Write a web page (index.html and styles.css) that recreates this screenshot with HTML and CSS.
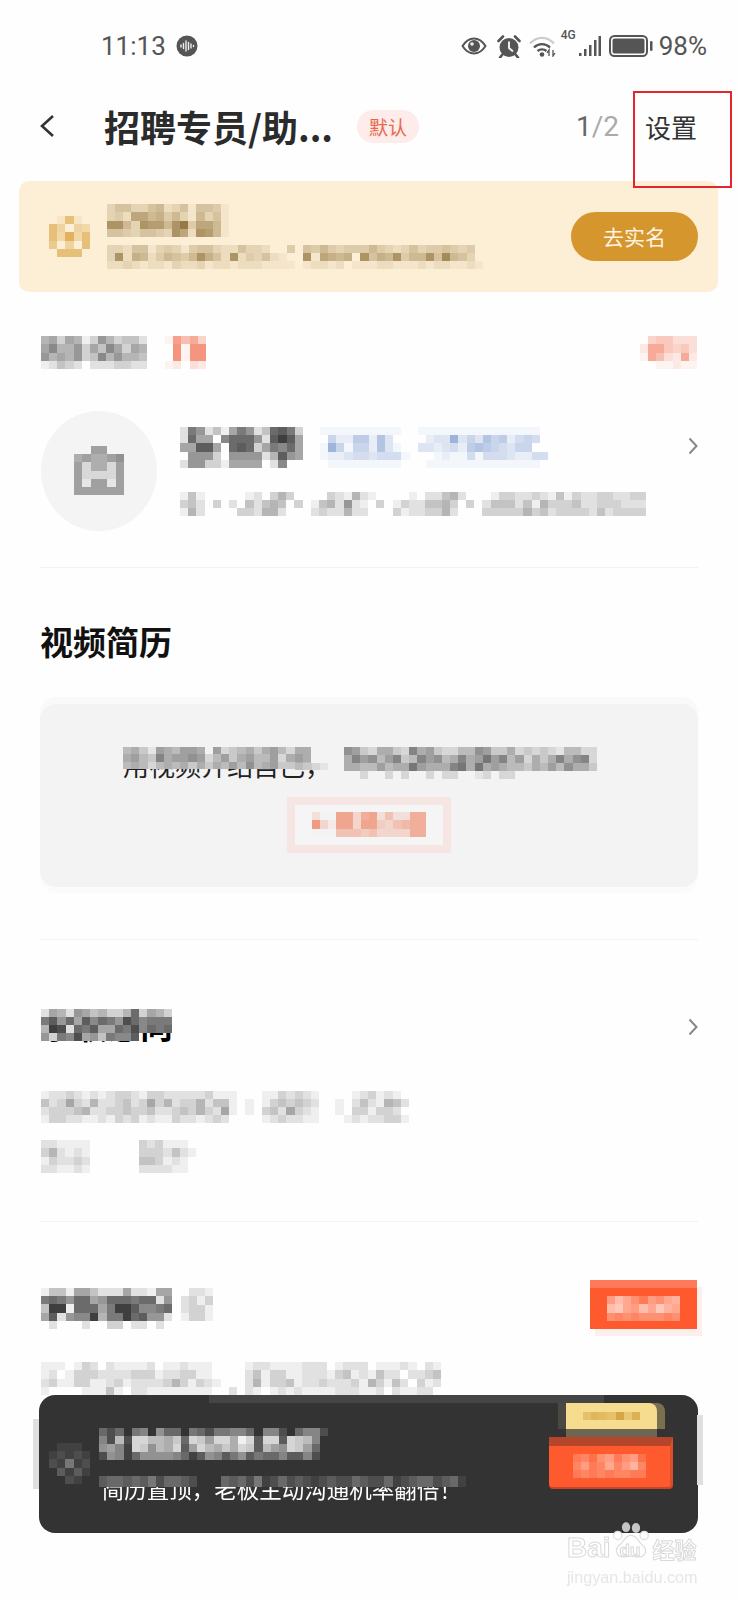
FILE: index.html
```html
<!DOCTYPE html>
<html lang="zh-CN">
<head>
    <meta charset="UTF-8">
    <meta name="viewport" content="width=device-width, initial-scale=1.0">
    <title>招聘专员/助理</title>
    <link rel="stylesheet" href="styles.css">
</head>
<body>
<div class="page">
    <div class="status">
        <span class="time">11:13</span>
        <svg class="voice" viewBox="0 0 22 22"><circle cx="11" cy="11" r="10.5" fill="#555"/><path d="M5 10v2M7.5 8.5v5M10 6v10M12.5 7.5v7M15 9v4M17.5 10.5v1" stroke="#eee" stroke-width="1.4" stroke-linecap="round"/></svg>
        <div class="status-right">
            <svg class="eye" viewBox="0 0 26 18"><path d="M1.5 9C5 3.5 8.5 1.5 13 1.5S21 3.5 24.5 9C21 14.500 17.500 16.500 13 16.500S5 14.500 1.500 9Z" fill="none" stroke="#555" stroke-width="2"/><circle cx="13" cy="9" r="6" fill="#555"/><circle cx="11" cy="7" r="1.800" fill="#eee"/></svg>
            <svg class="alarm" viewBox="0 0 24 23"><circle cx="12" cy="12.500" r="9.500" fill="#555"/><path d="M12 6.500v6.500l4 3.500" fill="none" stroke="#eee" stroke-width="2"/><path d="M1.500 6 6 1.500M22.500 6 18 1.500M5 20l-2 2.500M19 20l2 2.500" stroke="#555" stroke-width="2.600" stroke-linecap="round"/></svg>
            <svg class="wifi" viewBox="0 0 27 22"><path d="M1 8.500C8 1 18 1 25 8.500" fill="none" stroke="#ccc" stroke-width="2.400"/><path d="M5 12.500C9.500 8 16.500 8 21 12.500" fill="none" stroke="#555" stroke-width="2.400"/><path d="M8.500 16C11 13.800 15 13.800 17.500 16" fill="none" stroke="#555" stroke-width="2.400"/><circle cx="13" cy="19.500" r="2.300" fill="#555"/><path d="M20 21v-6l-2 3M24 15v6l2-3" fill="none" stroke="#555" stroke-width="1.300"/></svg>
            <span class="net">4G</span>
            <svg class="signal" viewBox="0 0 24 22"><path d="M2 18h2.500v3H2zM7 14h2.500v7H7zM12 10h2.500v11H12zM17 5h2.500v16H17zM21.500 1H24v20h-2.500z" fill="#555"/></svg>
            <svg class="battery" viewBox="0 0 44 22"><rect x="1" y="1" width="37" height="20" rx="4.500" fill="none" stroke="#555" stroke-width="2"/><rect x="3.500" y="3.500" width="32" height="15" rx="2" fill="#555"/><rect x="41" y="6" width="2.500" height="10" rx="1.200" fill="#555"/></svg>
            <span class="percent">98%</span>
        </div>
    </div>

    <div class="nav">
        <svg class="back" viewBox="0 0 16 24"><path d="M14 2 3 12l11 10" fill="none" stroke="#333" stroke-width="2.600"/></svg>
        <h1 class="nav-title">招聘专员/助...</h1>
        <span class="badge">默认</span>
        <span class="pager">1<em>/2</em></span>
        <span class="settings">设置</span>
    </div>
    <div class="red-box"></div>

    <div class="banner">
        <canvas class="mosaic ink-gold" data-rows="02a20|a6065|a5d5a|8060a|0aaa0"></canvas>
        <div class="banner-text">
            <canvas class="mosaic ink-brown" data-rows="355335623515541|342886746316351|aa63a996ad48861|55435543a82a961"></canvas>
            <canvas class="mosaic ink-brown" data-rows="332551343145532253320040546434446432353445434|3a276246546a752a24352100a187670a576a466a5b653|2232122132231221222111101221201112211121221121"></canvas>
        </div>
        <span class="realname">去实名</span>
    </div>

    <div class="row head-row">
        <canvas class="mosaic ink-dark" data-rows="56365137534420|68557364863650|75657348575540|12432022233220"></canvas>
        <canvas class="mosaic ink-red" data-rows="19684|0a1aa|0a1aa|12032"></canvas>
        <canvas class="mosaic ink-red push-right" data-rows="0455333|2885453|1863282|0011211"></canvas>
    </div>

    <div class="person">
        <div class="avatar">
            <canvas class="mosaic ink-dark on-gray" data-rows="006600|565567|625526|622226|616616|666666"></canvas>
        </div>
        <div class="person-info">
            <div class="name-row">
                <canvas class="mosaic ink-dark" data-rows="29724169724ab93|2a6608aaa72bdb6|66bb60aba3698a6|077730777725b76|277331666602800"></canvas>
                <canvas class="mosaic ink-blue" data-rows="1111111111001111111111111110|0522662730000233935375624540|1951552731003323426765435500|1223443444100012114144432244|0111111111000111111111111110"></canvas>
            </div>
            <canvas class="mosaic ink-dark person-line" data-rows="141000001203530000321521000010224520001332232141322332233|342030204245403014527210301322445303024442415333422333222|152000033255200023225220003122335200033333534233332423333"></canvas>
        </div>
        <svg class="chevron person-chevron" viewBox="0 0 10 18"><path d="M1.500 1.500 8.500 9l-7 7.500" fill="none" stroke="#888" stroke-width="2"/></svg>
    </div>
    <div class="divider divider-person"></div>

    <h2 class="section-title">视频简历</h2>
    <div class="video-card">
        <div class="video-line">
            <span class="video-text">用视频介绍自己，</span>
            <canvas class="mosaic ink-dark on-card over" data-h="22" data-rows="45316546650623453564255|56438566762463564462565|45424545353546474563354"></canvas>
            <canvas class="mosaic ink-dark on-card over over-patch" data-h="7" data-rows="4321"></canvas>
            <canvas class="mosaic ink-dark on-card over over-right" data-rows="7632553285632244763352323214422|5867468348674585696846253585782|5544645596555895956544354647553|0020020200202200120220000000000"></canvas>
        </div>
        <div class="record-btn">
            <canvas class="mosaic ink-orange on-card" data-rows="20088378252277|93188388435677|00055545333377"></canvas>
        </div>
    </div>
    <div class="divider divider-video"></div>

    <div class="row expect-row">
        <div class="covered-title">
            <span class="covered-text">求职意向</span>
            <canvas class="mosaic ink-dark over" data-rows="26527645335a3653|9b7a6b8a97ca8999|5dc2a9b66a9c8a9a"></canvas>
            <canvas class="mosaic ink-dark over over-last" data-rows="7398c674988b"></canvas>
        </div>
        <svg class="chevron expect-chevron" viewBox="0 0 10 18"><path d="M1.500 1.500 8.500 9l-7 7.500" fill="none" stroke="#888" stroke-width="2"/></svg>
    </div>
    <canvas class="mosaic ink-dark expect-line" data-rows="122321212332133222223111000113232100001231210|423632522342363523352441010134343200102421542|233345223343342234353261010342632100103313320|133221121323121132212320000123221100012122331"></canvas>
    <canvas class="mosaic ink-dark expect-line-two" data-rows="2211110000003231110|3521210000003332421|1322320000004431210|2211210000002222110"></canvas>
    <div class="divider divider-expect"></div>

    <div class="row pref-row">
        <canvas class="mosaic ink-dark" data-rows="1441664222622166|9a97aa67aaa9aa27|4dd1aaa69ddb889a|6b2788d599dab772|0200020033022020"></canvas>
        <canvas class="mosaic ink-dark" data-rows="0221|2313|2331|1331"></canvas>
        <div class="pref-btn">
            <canvas class="mosaic ink-white on-orange" data-rows="697536578|9a7697a87|545455545"></canvas>
        </div>
    </div>
    <canvas class="mosaic ink-dark pref-line" data-rows="1110132021111201121110000122111122201222011121021|1201333222233312233110000241331122213412142202234|2311331123122223531321000251334122322231531420312|1000011141022111111110020210121211112221120211220"></canvas>

    <div class="promo">
        <canvas class="mosaic ink-white on-dark promo-icon" data-rows="01110|12121|21512|03131|00210"></canvas>
        <div class="promo-text">
            <canvas class="mosaic ink-white on-dark" data-rows="4240560744054255664066204662|62a2ccaa9b4cb8cc9ec3cc3cba60|7861cb7a9c38ca9b9cb3a87cb840|2761477776413763573544633620"></canvas>
            <div class="promo-line">
                <span class="promo-sub">简历置顶，老板主动沟通机率翻倍！</span>
                <canvas class="mosaic ink-white on-dark over over-sub" data-h="11" data-rows="344343524432000434251242321232243224123442341"></canvas>
            </div>
        </div>
        <div class="promo-action">
            <div class="coupon">
                <canvas class="mosaic ink-coupon on-coupon" data-rows="5765a48"></canvas>
            </div>
            <div class="coupon-under"></div>
            <div class="buy-btn">
                <canvas class="mosaic ink-white on-orange" data-rows="342563562|463474684|343434433"></canvas>
            </div>
        </div>
    </div>

    <div class="watermark">
        <div class="wm-logo">
            <span class="wm-latin">Bai</span>
            <span class="wm-paw">
                <svg viewBox="0 0 46 50"><ellipse cx="17" cy="7" rx="5" ry="6" fill="#c6c6c6"/><ellipse cx="29" cy="8" rx="5" ry="6" fill="#c6c6c6"/><circle cx="7" cy="17" r="5" fill="#fff" stroke="#ddd" stroke-width="1.500"/><circle cx="39" cy="17" r="5" fill="#fff" stroke="#ddd" stroke-width="1.500"/><path d="M23 17C16 17 15 24 9 29 2 35 6 44 15 43 20 42 26 42 31 43 40 44 44 35 37 29 31 24 30 17 23 17Z" fill="#fff" stroke="#ddd" stroke-width="1.500"/></svg>
                <span class="wm-du">du</span>
            </span>
            <span class="wm-cn">经验</span>
        </div>
        <span class="wm-url">jingyan.baidu.com</span>
    </div>
</div>
<script src="mosaic.js"></script>
</body>
</html>
```
FILE: styles.css
```css
* {
    margin: 0;
    padding: 0;
    box-sizing: border-box;
}
body {
    font-family: "Noto Sans CJK SC", "Noto Sans", sans-serif;
    background-color: #fefefe;
}
.page {
    position: relative;
    width: 738px;
    height: 1600px;
    overflow: hidden;
}

/* status bar */
.status {
    display: flex;
    align-items: center;
    height: 92px;
    padding: 0 31px 0 101px;
    color: #555;
}
.time, .percent {
    font-family: Roboto, sans-serif;
    font-size: 26px;
    font-weight: 400;
}
.voice {
    width: 22px;
    height: 22px;
    margin-left: 10px;
}
.status-right {
    display: flex;
    align-items: center;
    margin-left: auto;
}
.eye {
    width: 26px;
    height: 18px;
}
.alarm {
    width: 24px;
    height: 23px;
    margin-left: 10px;
}
.wifi {
    width: 27px;
    height: 22px;
    margin-left: 8px;
}
.net {
    align-self: flex-start;
    margin: -3px 0 0 5px;
    font-family: Roboto, sans-serif;
    font-size: 12px;
    font-weight: 500;
    line-height: 14px;
}
.signal {
    width: 24px;
    height: 22px;
    margin-left: 1px;
}
.battery {
    width: 44px;
    height: 22px;
    margin-left: 8px;
}
.percent {
    margin-left: 6px;
}

/* nav */
.nav {
    display: flex;
    align-items: center;
    height: 68px;
    margin-bottom: 21px;
    padding: 0 41px 0 39px;
}
.back {
    width: 16px;
    height: 24px;
    margin-right: 49px;
}
.nav-title {
    font-size: 36px;
    font-weight: 700;
    line-height: 44px;
    color: #2b2b2b;
    white-space: nowrap;
}
.badge {
    margin-left: 24px;
    padding: 0 12px;
    border-radius: 17px;
    background-color: #fdecea;
    color: #e8684f;
    font-size: 19px;
    line-height: 33px;
}
.pager {
    margin-left: auto;
    font-family: Roboto, sans-serif;
    font-size: 28px;
    color: #666;
}
.pager em {
    font-style: normal;
    color: #aaa;
}
.settings {
    margin-left: 26px;
    font-size: 26px;
    color: #333;
}
.red-box {
    position: absolute;
    top: 91px;
    left: 633px;
    width: 99px;
    height: 97px;
    border: 2px solid #e4252b;
}

/* pixelated blocks, drawn by mosaic.js */
.mosaic {
    display: block;
    flex-shrink: 0;
    image-rendering: pixelated;
    filter: blur(0.5px);
    background-color: #fefefe;
}
.ink-dark { color: #222; }
.ink-red { color: #f0603c; }
.ink-blue { color: #5f82c4; }
.ink-orange { color: #ec6036; }
.ink-white { color: #fff; }
.ink-gold { color: #dba94a; background-color: #fdefd6; }
.ink-brown { color: #86672d; background-color: #fdefd6; }
.ink-coupon { color: #c98a20; }
.on-gray { background-color: #f4f4f4; }
.on-card { background-color: #f3f3f3; }
.on-orange { background-color: #ff5a2d; }
.on-dark { background-color: #333; }
.on-coupon { background-color: #f5dc8f; }
.over {
    position: absolute;
    top: 0;
    left: 0;
}

/* banner */
.banner {
    display: flex;
    align-items: center;
    height: 111px;
    margin: 0 20px 0 19px;
    padding: 0 20px 0 30px;
    border-radius: 10px;
    background-color: #fdefd6;
}
.banner-text {
    display: flex;
    flex-direction: column;
    gap: 8px;
    margin-left: 17px;
}
.realname {
    margin-left: auto;
    width: 127px;
    border-radius: 25px;
    background-color: #d6962e;
    color: #fdf3e0;
    font-size: 21px;
    line-height: 49px;
    text-align: center;
}

/* rows */
.row {
    display: flex;
    padding: 0 41px 0 41px;
}
.head-row {
    gap: 10px;
    margin-top: 44px;
}
.push-right {
    margin-left: auto;
}
.person {
    display: flex;
    height: 120px;
    margin-top: 42px;
    padding: 0 40px 0 41px;
}
.avatar {
    display: flex;
    align-items: center;
    justify-content: center;
    width: 116px;
    height: 120px;
    border-radius: 50%;
    background-color: #f4f4f4;
}
.person-info {
    margin-left: 23px;
    padding-top: 16px;
}
.name-row {
    display: flex;
    gap: 17px;
}
.person-line {
    margin-top: 24px;
}
.chevron {
    width: 10px;
    height: 18px;
    margin-left: auto;
}
.person-chevron {
    margin-top: 26px;
}
.divider {
    height: 1px;
    margin: 0 40px;
    background-color: #f2f2f2;
}
.divider-person {
    margin-top: 36px;
}
.section-title {
    margin: 53px 0 0 40px;
    font-size: 33px;
    font-weight: 700;
    line-height: 40px;
    color: #111;
}

/* video card */
.video-card {
    display: flex;
    flex-direction: column;
    align-items: center;
    height: 183px;
    margin: 43px 40px 0 40px;
    padding-top: 43px;
    border-radius: 16px;
    background-color: #f3f3f3;
    box-shadow: 0 -7px 0 #f9f9f9, 0 6px 0 #fbfbfb;
}
.video-line {
    position: relative;
    align-self: flex-start;
    width: 476px;
    height: 32px;
    margin-left: 83px;
}
.video-text {
    font-size: 26px;
    line-height: 36px;
    color: #222;
    white-space: nowrap;
}
.over-patch {
    top: 16px;
    left: 172px;
}
.over-right {
    left: 221px;
}
.record-btn {
    display: flex;
    align-items: center;
    justify-content: center;
    width: 164px;
    height: 56px;
    margin-top: 18px;
    border: 8px solid #f6e6e3;
    background-color: #f5f5f5;
}
.divider-video {
    margin-top: 52px;
}

/* expectation */
.expect-row {
    margin-top: 69px;
    padding-right: 40px;
}
.covered-title {
    position: relative;
    width: 132px;
    height: 33px;
}
.covered-text {
    font-size: 33px;
    font-weight: 700;
    line-height: 33px;
    color: #000;
    white-space: nowrap;
}
.over-last {
    top: 24.500px;
}
.expect-chevron {
    margin-top: 9px;
}
.expect-line {
    margin: 49px 0 0 41px;
}
.expect-line-two {
    margin: 17px 0 0 41px;
}
.divider-expect {
    margin-top: 48px;
}

/* preference */
.pref-row {
    gap: 9px;
    align-items: flex-start;
    margin-top: 58px;
}
.pref-row > .mosaic {
    margin-top: 8px;
}
.pref-btn {
    display: flex;
    align-items: center;
    justify-content: center;
    width: 107px;
    height: 49px;
    margin-left: auto;
    border-top: 8px solid #ff7a5a;
    background-color: #ff5a2d;
    box-shadow: 5px 7px 0 #fdf0ec;
}
.pref-line {
    margin: 33px 0 0 41px;
}

/* promo bar */
.promo {
    position: relative;
    display: flex;
    align-items: flex-start;
    height: 138px;
    margin: 0 40px 0 39px;
    border-radius: 16px;
    background: linear-gradient(#454545, #454545) 170px 0 / 395px 8px no-repeat, #333;
}
.promo::before, .promo::after {
    content: "";
    position: absolute;
    width: 6px;
    height: 70px;
    background-color: #e0e0e0;
}
.promo::before {
    top: 24px;
    left: -6px;
}
.promo::after {
    top: 20px;
    right: -5px;
}
.promo-icon {
    margin: 48px 0 0 10px;
}
.promo-text {
    margin: 33px 0 0 9px;
}
.promo-line {
    position: relative;
    width: 370px;
    height: 28px;
    margin-top: 14px;
    padding-left: 3px;
}
.promo-sub {
    display: block;
    font-size: 22.5px;
    line-height: 28px;
    color: #fff;
    white-space: nowrap;
}
.over-sub {
    top: 2px;
}
.promo-action {
    width: 124px;
    margin: 8px 25px 0 auto;
}
.coupon {
    display: flex;
    align-items: center;
    justify-content: center;
    width: 91px;
    height: 26px;
    margin-left: 17px;
    border-radius: 0 8px 0 0;
    background-color: #f5dc8f;
    box-shadow: -8px 0 0 #4a4840, 8px 0 0 #7a7050;
}
.coupon-under {
    width: 91px;
    height: 8px;
    margin-left: 17px;
    background-color: #6e6650;
}
.buy-btn {
    display: flex;
    align-items: center;
    justify-content: center;
    height: 50px;
    border-top: 9px solid #b5452b;
    border-right: 3px solid #d94f2a;
    border-radius: 0 0 4px 4px;
    background-color: #ff5a2d;
    box-shadow: 0 2px 0 #c8452a;
}

/* watermark */
.watermark {
    position: absolute;
    top: 1520px;
    left: 567px;
    width: 132px;
}
.wm-logo {
    display: flex;
    align-items: flex-end;
    height: 44px;
    white-space: nowrap;
}
.wm-latin, .wm-du, .wm-cn {
    font-family: "Liberation Sans", sans-serif;
    font-weight: 700;
    color: #fff;
    -webkit-text-stroke: 1px #d9d9d9;
}
.wm-latin {
    font-size: 28px;
    line-height: 32px;
}
.wm-paw {
    position: relative;
    flex-shrink: 0;
    width: 38px;
    height: 44px;
    margin-left: 1px;
}
.wm-paw svg {
    display: block;
    width: 38px;
    height: 44px;
}
.wm-du {
    position: absolute;
    bottom: 3px;
    left: 8px;
    font-size: 17px;
    line-height: 20px;
}
.wm-cn {
    flex-shrink: 0;
    margin-left: 3px;
    font-family: "Noto Sans CJK SC", sans-serif;
    font-size: 22px;
    line-height: 32px;
}
.wm-url {
    display: block;
    margin-top: 3px;
    font-family: "Liberation Sans", sans-serif;
    font-size: 16.200px;
    line-height: 20px;
    color: #e6e6e6;
    white-space: nowrap;
}
```
FILE: mosaic.js
```js
// fills each .mosaic canvas from its data-rows: hex digits are ink strength, 0 is the background
const CELL = 8.17;

function toRgb(value) {
    return value.match(/[\d.]+/g).slice(0, 3).map(Number);
}

document.querySelectorAll('.mosaic').forEach(canvas => {
    const rows = canvas.dataset.rows.split('|');
    const cols = Math.max(...rows.map(row => row.length));
    const styles = getComputedStyle(canvas);
    const ink = toRgb(styles.color);
    const paper = toRgb(styles.backgroundColor);

    canvas.width = cols;
    canvas.height = rows.length;
    canvas.style.width = `${cols * CELL}px`;
    canvas.style.height = `${canvas.dataset.h || rows.length * CELL}px`;

    const ctx = canvas.getContext('2d');
    rows.forEach((row, y) => {
        [...row.padEnd(cols, '0')].forEach((digit, x) => {
            const strength = parseInt(digit, 16) / 15;
            const mixed = paper.map((c, i) => Math.round(c + (ink[i] - c) * strength));
            ctx.fillStyle = `rgb(${mixed.join(',')})`;
            ctx.fillRect(x, y, 1, 1);
        });
    });
});
```
